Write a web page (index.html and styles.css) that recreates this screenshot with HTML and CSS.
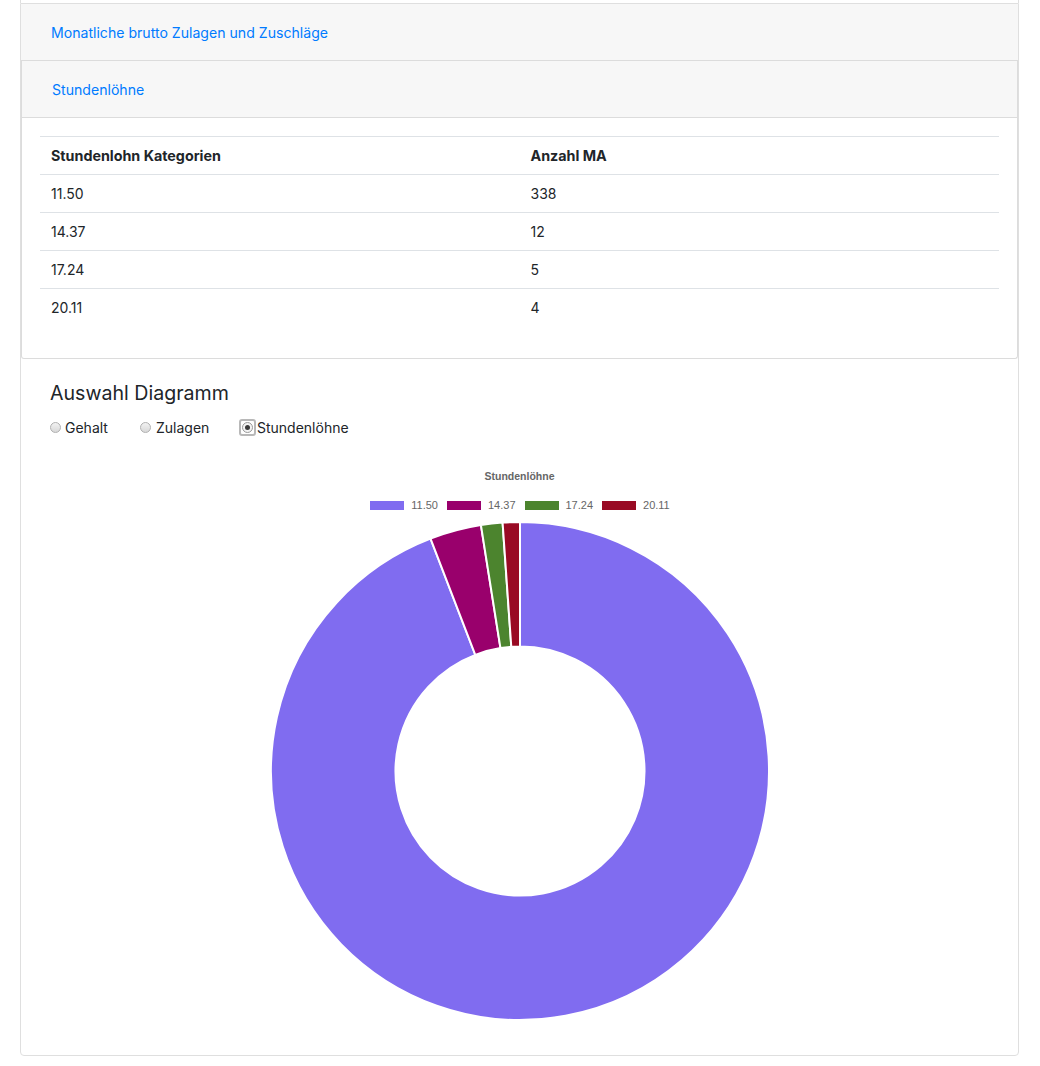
FILE: index.html
```html
<!DOCTYPE html>
<html lang="de">
<head>
<meta charset="utf-8">
<title>Stundenlöhne</title>
<link rel="stylesheet" href="styles.css">
</head>
<body>
<div class="stub"></div>
<div class="card">
  <div class="card-header"><a class="hlink" href="#">Monatliche brutto Zulagen und Zuschläge</a></div>
  <div class="subcard">
    <div class="card-header sub"><a class="hlink" href="#">Stundenlöhne</a></div>
    <div class="card-body">
      <table class="tbl">
        <thead>
          <tr><th>Stundenlohn Kategorien</th><th>Anzahl MA</th></tr>
        </thead>
        <tbody>
          <tr><td>11.50</td><td>338</td></tr>
          <tr><td>14.37</td><td>12</td></tr>
          <tr><td>17.24</td><td>5</td></tr>
          <tr><td>20.11</td><td>4</td></tr>
        </tbody>
      </table>
    </div>
  </div>
  <div class="chart-section">
    <h5 class="title">Auswahl Diagramm</h5>
    <div class="radios">
      <label class="radio r1"><span class="dot"></span>Gehalt</label>
      <label class="radio r2"><span class="dot"></span>Zulagen</label>
      <label class="radio r3"><span class="focus"><span class="dot on"></span></span>Stundenlöhne</label>
    </div>
    <div class="chart">
      <div class="chart-title">Stundenlöhne</div>
      <div class="legend">
        <span class="item"><span class="box c1"></span>11.50</span>
        <span class="item"><span class="box c2"></span>14.37</span>
        <span class="item"><span class="box c3"></span>17.24</span>
        <span class="item"><span class="box c4"></span>20.11</span>
      </div>
      <svg class="donut" width="500" height="500" viewBox="0 0 500 500">
        <path fill="#806cf0" stroke="#fff" stroke-width="2" d="M250,1 A249,249 0 1 1 160.53,17.63 L205.27,133.82 A124.5,124.5 0 1 0 250,125.5 Z"/>
        <path fill="#99006c" stroke="#fff" stroke-width="2" d="M160.53,17.63 A249,249 0 0 1 210.93,4.09 L230.47,127.04 A124.5,124.5 0 0 0 205.27,133.82 Z"/>
        <path fill="#4c842e" stroke="#fff" stroke-width="2" d="M210.93,4.09 A249,249 0 0 1 232.59,1.61 L241.29,125.81 A124.5,124.5 0 0 0 230.47,127.04 Z"/>
        <path fill="#990a24" stroke="#fff" stroke-width="2" d="M232.59,1.61 A249,249 0 0 1 250,1 L250,125.5 A124.5,124.5 0 0 0 241.29,125.81 Z"/>
      </svg>
    </div>
  </div>
</div>
</body>
</html>
```

FILE: styles.css
```css
html, body {
  margin: 0;
  padding: 0;
  background: #fff;
}
body {
  font-family: Inter, "Liberation Sans", Arial, sans-serif;
  color: #212529;
}
.stub {
  margin-left: 20px;
  width: 999px;
  box-sizing: border-box;
  height: 3px;
  border-left: 1px solid #dfdfdf;
  border-right: 1px solid #dfdfdf;
}
.card {
  margin-left: 20px;
  width: 999px;
  box-sizing: border-box;
  border: 1px solid #dfdfdf;
  border-radius: 0 0 4px 4px;
  background: #fff;
}
.card-header {
  height: 56px;
  background: #f7f7f7;
  border-bottom: 1px solid #dcdcdc;
  display: flex;
  align-items: center;
  padding-left: 30px;
}
.card-header.sub {
  padding-left: 30px;
}
.hlink {
  color: #007bff;
  text-decoration: none;
  font-size: 14.1px;
}
.subcard {
  border-left: 1px solid #dcdcdc;
  border-right: 1px solid #dcdcdc;
  border-bottom: 1px solid #dcdcdc;
  border-radius: 0 0 3px 3px;
}
.card-body {
  padding: 18px 18px 31px 18px;
}
.tbl {
  width: 100%;
  border-collapse: collapse;
  font-size: 14px;
  table-layout: fixed;
}
.tbl th, .tbl td {
  text-align: left;
  height: 38px;
  padding: 0 11px;
  border-top: 1px solid #dee2e6;
  vertical-align: middle;
  box-sizing: border-box;
}
.tbl th {
  font-weight: 700;
  font-size: 14.3px;
}
.chart-section {
  padding: 22px 0 34px 29px;
}
.title {
  margin: 0;
  font-size: 19.6px;
  font-weight: 400;
  line-height: 24px;
}
.radios {
  display: flex;
  align-items: center;
  margin-top: 13px;
  height: 20px;
  font-size: 14px;
}
.radio {
  display: flex;
  align-items: center;
}
.r1 { width: 90px; }
.r2 { width: 99px; }
.dot {
  width: 9px;
  height: 9px;
  border-radius: 50%;
  border: 1px solid #b0b0b0;
  background: linear-gradient(#f2f2f2, #d8d8d8);
  margin-right: 5px;
  position: relative;
}
.r1 .dot { margin-right: 4px; }
.dot.on {
  margin-right: 0;
  background: #f4f4f4;
  border-color: #9a9a9a;
}
.dot.on::after {
  content: "";
  position: absolute;
  left: 2px;
  top: 2px;
  width: 5px;
  height: 5px;
  border-radius: 50%;
  background: #3a3a3a;
}
.focus {
  width: 13px;
  height: 13px;
  border: 2px solid #b8b8b8;
  border-radius: 3px;
  display: flex;
  align-items: center;
  justify-content: center;
  margin-right: 1px;
}
.chart {
  margin-left: -29px;
  margin-top: 31px;
  display: flex;
  flex-direction: column;
  align-items: center;
}
.chart-title {
  font-family: "Liberation Sans", Arial, sans-serif;
  font-weight: 700;
  font-size: 10.5px;
  line-height: 14px;
  color: #666;
}
.legend {
  margin-top: 17px;
  display: flex;
  gap: 8px;
  height: 11px;
  font-family: "Liberation Sans", Arial, sans-serif;
  font-size: 11px;
  color: #666;
}
.item {
  display: flex;
  align-items: center;
  line-height: 11px;
}
.box {
  width: 34px;
  height: 9px;
  border: 1px solid #fff;
  margin-right: 6px;
}
.c1 { background: #806cf0; }
.c2 { background: #99006c; }
.c3 { background: #4c842e; }
.c4 { background: #990a24; }
.donut {
  display: block;
  margin-top: 10px;
}
```
